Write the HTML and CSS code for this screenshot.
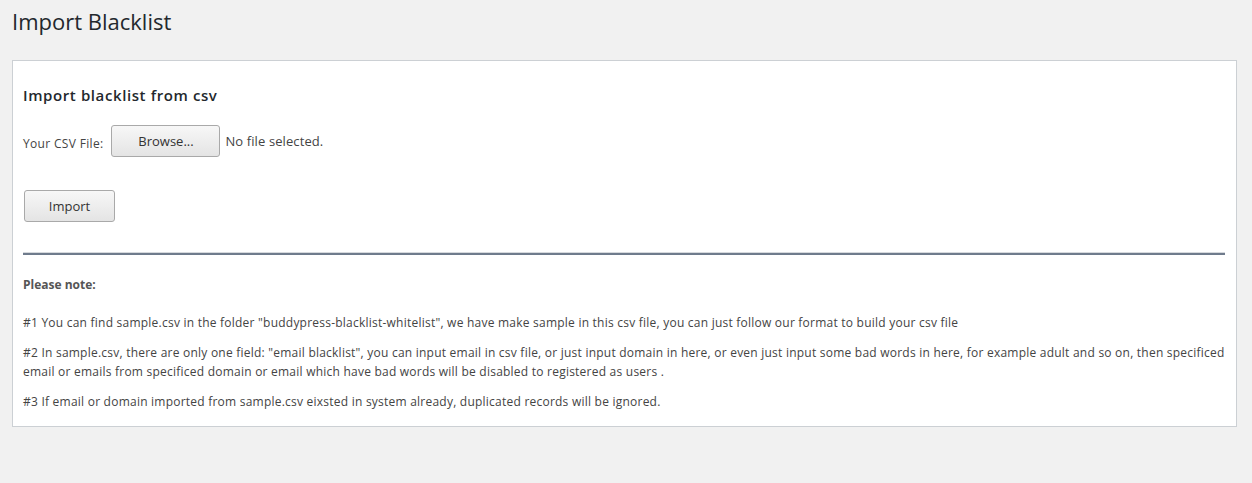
FILE: index.html
```html
<!DOCTYPE html>
<html lang="en">
<head>
    <meta charset="UTF-8">
    <title>Import Blacklist</title>
    <link rel="stylesheet" href="styles.css">
</head>
<body>
<div class="wrap">
    <h1 class="page-title">Import Blacklist</h1>

    <div class="panel">
        <h3 class="panel-title">Import blacklist from csv</h3>

        <form class="import-form">
            <div class="file-row">
                <span class="file-label">Your CSV File:</span>
                <button type="button" class="btn btn-browse">Browse...</button>
                <span class="file-status">No file selected.</span>
            </div>
            <div class="submit-row">
                <button type="button" class="btn btn-import">Import</button>
            </div>
        </form>

        <hr class="divider">

        <!-- notes -->
        <p class="note-title">Please note:</p>
        <p class="note">#1 You can find sample.csv in the folder "buddypress-blacklist-whitelist", we have make sample in this csv file, you can just follow our format to build your csv file</p>
        <p class="note">#2 In sample.csv, there are only one field: "email blacklist", you can input email in csv file, or just input domain in here, or even just input some bad words in here, for example adult and so on, then specificed email or emails from specificed domain or email which have bad words will be disabled to registered as users .</p>
        <p class="note">#3 If email or domain imported from sample.csv eixsted in system already, duplicated records will be ignored.</p>
    </div>
</div>
</body>
</html>
```

FILE: styles.css
```css
body {
    margin: 0;
    padding: 0;
    background-color: #f1f1f1;
    font-family: "Open Sans", sans-serif;
    color: #444;
}

.wrap {
    padding: 0 15px 0 12px;
}

.page-title {
    margin: 0;
    padding: 6px 0 0 0;
    height: 54px;
    font-size: 22px;
    font-weight: 400;
    color: #23282d;
}

.panel {
    background-color: #fff;
    border: 1px solid #ccd0d4;
    padding: 24px 10px 15px 10px;
}

.panel-title {
    margin: 0 0 20px 0;
    font-size: 15px;
    font-weight: 600;
    letter-spacing: 0.6px;
    color: #23282d;
}

.file-row {
    display: flex;
    align-items: center;
    height: 32px;
}

.file-label {
    font-size: 12px;
    letter-spacing: 0.33px;
    color: #444;
    margin-right: 8px;
    padding-top: 4px;
}

.file-status {
    font-size: 13px;
    letter-spacing: 0.1px;
    color: #444;
    margin-left: 5px;
}

.btn {
    font-family: "Open Sans", sans-serif;
    font-size: 13px;
    color: #333;
    background: linear-gradient(#f7f7f7, #e4e4e4);
    border: 1px solid #a9a9a9;
    border-radius: 3px;
    height: 32px;
    padding: 0;
}

.btn-browse {
    width: 109px;
}

.submit-row {
    margin-top: 33px;
}

.btn-import {
    width: 91px;
    margin-left: 1px;
}

.divider {
    margin: 30px 1px 0 0;
    border: 0;
    border-top: 1px solid #d6d9dd;
    border-bottom: 2px solid #6f7b8c;
    height: 0;
}

.note-title {
    margin: 21px 0 0 0;
    font-size: 12px;
    font-weight: 700;
    color: #555;
}

.note {
    margin: 20px 0 0 0;
    font-size: 12px;
    line-height: 19px;
    letter-spacing: 0.23px;
    color: #444;
}

.note + .note {
    margin-top: 11px;
}
```
